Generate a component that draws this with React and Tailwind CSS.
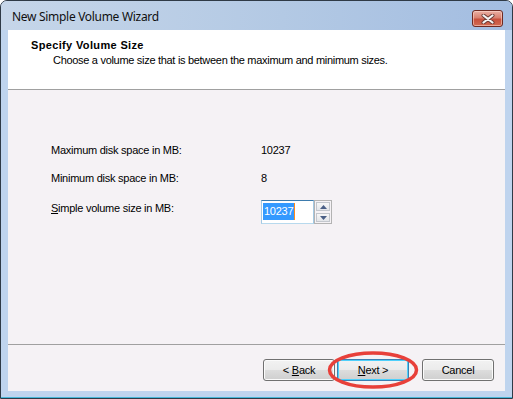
import React from 'react'

function CloseButton() {
  return (
    <div className="mt-[9px] flex h-[17px] w-[31px] items-center justify-center rounded-[3px] border border-[#6e2a22] bg-[linear-gradient(#eab0a4,#d98170_45%,#c8503c_55%,#d26b52)] shadow-[inset_0_0_0_1px_rgba(255,220,210,0.55)]">
      <svg width="14" height="10" viewBox="0 0 14 10">
        <path d="M2.5 1.5 L11.5 8.5 M11.5 1.5 L2.5 8.5" stroke="#6b3a34" strokeWidth="4" strokeLinecap="round" />
        <path d="M2.5 1.5 L11.5 8.5 M11.5 1.5 L2.5 8.5" stroke="#f4f4f4" strokeWidth="2.2" strokeLinecap="round" />
      </svg>
    </div>
  )
}

function SpinArrow({ up }) {
  return (
    <div className="flex h-[9px] w-[14px] items-center justify-center border border-[#c3c7cd] bg-[linear-gradient(#f7f7f7,#e3e5e9)]">
      <svg width="7" height="4" viewBox="0 0 7 4">
        <path d={up ? 'M0 4 L3.5 0 L7 4 Z' : 'M0 0 L3.5 4 L7 0 Z'} fill="#4a5f86" />
      </svg>
    </div>
  )
}

function WizButton({ children, isDefault }) {
  const edge = isDefault
    ? 'border-[#3c7fb1] shadow-[inset_0_0_0_1px_#4fd0fb]'
    : 'border-[#707070] shadow-[inset_0_0_0_1px_#fbfbfb]'
  return (
    <div className={`flex h-[22px] w-[72px] items-center justify-center rounded-[3px] border ${edge} bg-[linear-gradient(#f2f2f2,#ebebeb_50%,#dddddd_50%,#cfcfcf)] leading-[13px]`}>
      {children}
    </div>
  )
}

export default function App() {
  return (
    <div className="flex h-[399px] w-[513px] flex-col rounded-t-[7px] border border-[#2f3a46] bg-[#bfd4ee] font-['Liberation_Sans',Arial,sans-serif] text-[11px] tracking-[-0.25px] text-black">
      {/* title bar */}
      <div className="flex h-[29px] items-start justify-between rounded-t-[6px] bg-[linear-gradient(90deg,#c6d6e9,#b3c9e4_55%,#a3bde1)] pl-[11px] pr-[9px]">
        <div className="mt-[8px] font-['Noto_Sans',sans-serif] text-[12px] leading-[16px] tracking-[-0.3px] text-[#101010]">
          New Simple Volume Wizard
        </div>
        <CloseButton />
      </div>

      {/* client area */}
      <div className="mx-[7px] flex h-[361px] flex-col">
        <div className="h-[59px] bg-white pl-[23px] pt-[9px]">
          <div className="font-bold leading-[13px] tracking-[0.35px]">Specify Volume Size</div>
          <div className="mt-[2px] pl-[22px] leading-[13px] tracking-[-0.3px]">
            Choose a volume size that is between the maximum and minimum sizes.
          </div>
        </div>
        <div className="h-[1px] bg-[#a0a0a0]" />

        <div className="flex h-[254px] flex-col gap-[15px] bg-[#f5f2f5] pl-[43px] pt-[54px]">
          <div className="flex leading-[13px]">
            <div className="w-[210px]">Maximum disk space in MB:</div>
            <div>10237</div>
          </div>
          <div className="flex leading-[13px]">
            <div className="w-[210px]">Minimum disk space in MB:</div>
            <div>8</div>
          </div>
          <div className="flex items-start">
            <div className="mt-[2px] w-[210px] leading-[13px]">
              <span className="underline">S</span>imple volume size in MB:
            </div>
            <div className="flex h-[24px] w-[53px] items-start border border-[#a4c9e3] border-t-[#3d7bad] border-b-[#b7d9ed] bg-white pl-[1px] pt-[2px]">
              <span className="h-[17px] bg-[#3399ff] px-[1px] leading-[17px] text-white">10237</span>
              <span className="h-[17px] w-[1px] bg-[#ff8a1a]" />
            </div>
            <div className="flex h-[24px] w-[18px] flex-col items-center justify-center gap-[2px] border border-[#b3b3b3] bg-[#f5f2f5]">
              <SpinArrow up />
              <SpinArrow />
            </div>
          </div>
        </div>

        <div className="h-[1px] bg-[#a0a0a0]" />

        <div className="relative flex h-[46px] justify-end bg-[#f5f2f5] pr-[11px] pt-[14px]">
          <WizButton>
            &lt; <span className="ml-[3px] underline">B</span>ack
          </WizButton>
          <div className="ml-[2px]">
            <WizButton isDefault>
              <span className="underline">N</span>ext &gt;
            </WizButton>
          </div>
          <div className="ml-[13px]">
            <WizButton>Cancel</WizButton>
          </div>
          <svg className="absolute left-[318px] top-[5px]" width="94" height="40" viewBox="0 0 94 40">
            <ellipse cx="47" cy="20" rx="43.5" ry="17" fill="none" stroke="#e8403a" strokeWidth="3.5" />
          </svg>
        </div>
      </div>

      <div className="h-[6px]" />
      <div className="h-[1px] bg-[#49b7d8]" />
    </div>
  )
}
